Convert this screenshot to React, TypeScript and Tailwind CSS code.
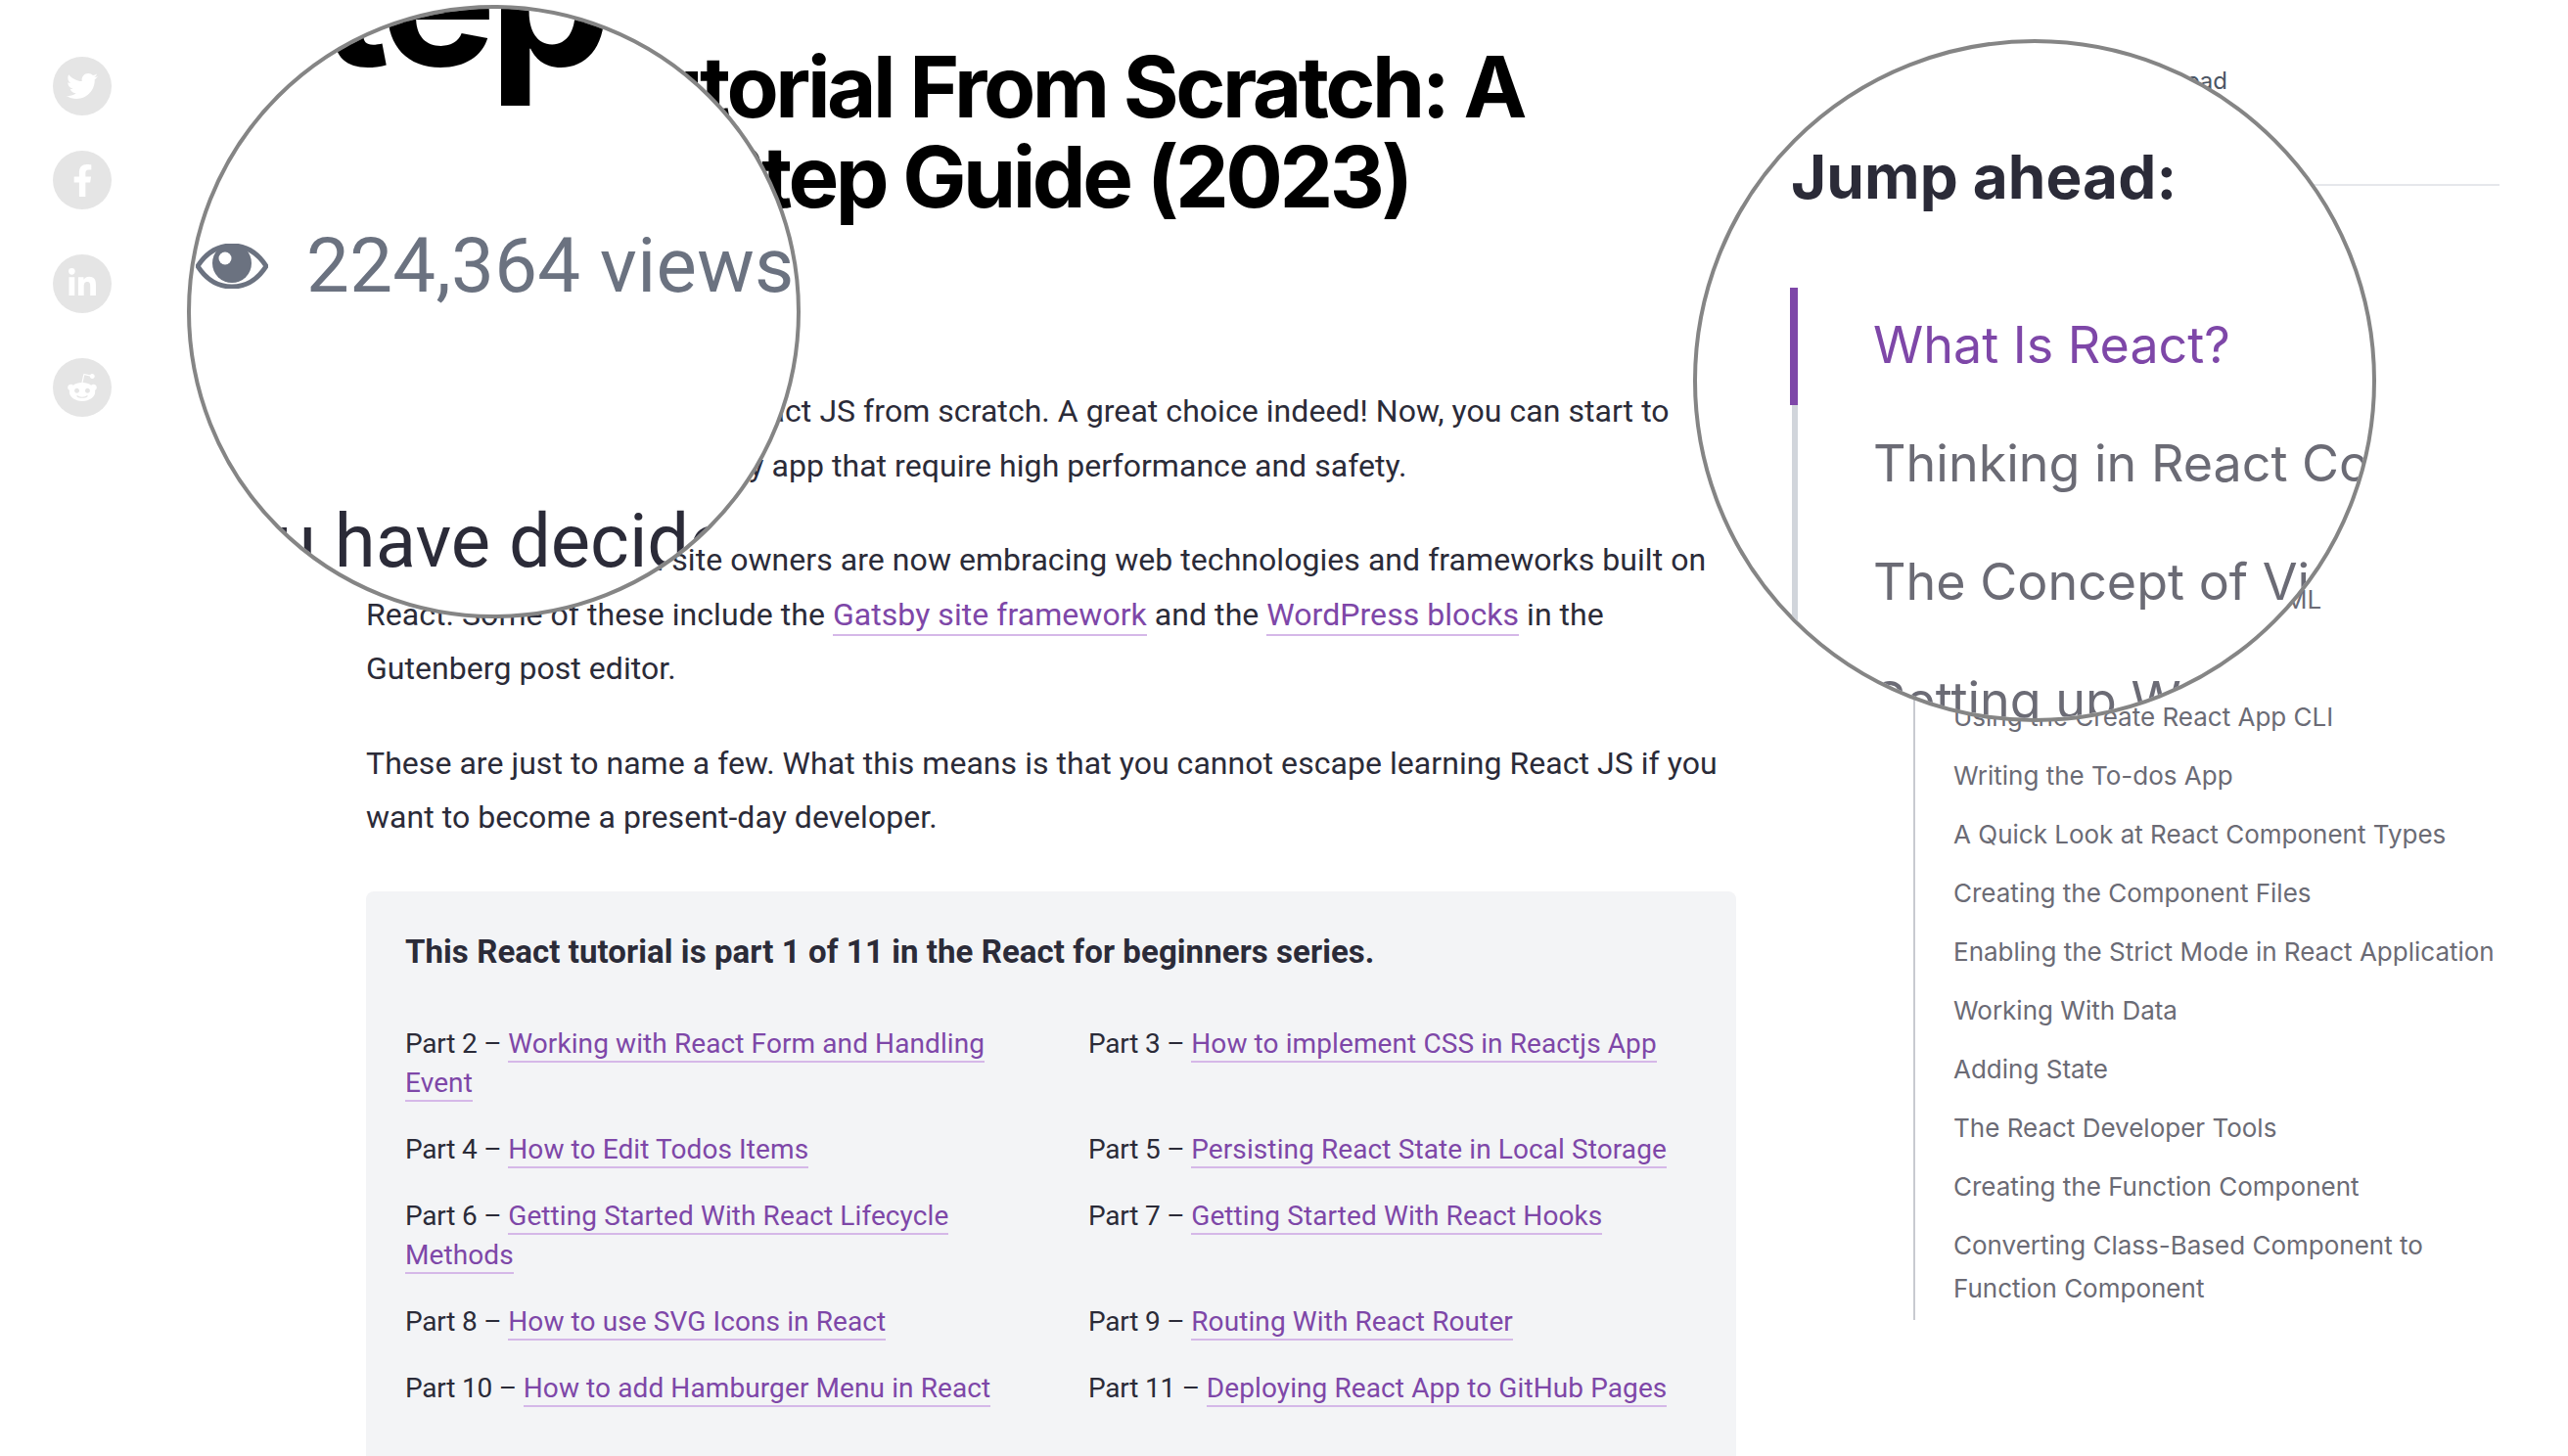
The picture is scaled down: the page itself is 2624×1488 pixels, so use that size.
import { FaTwitter, FaFacebookF, FaLinkedinIn, FaRedditAlien } from 'react-icons/fa';

type Part = { label: string; title: string };

const parts: Part[][] = [
  [
    { label: 'Part 2', title: 'Working with React Form and Handling Event' },
    { label: 'Part 3', title: 'How to implement CSS in Reactjs App' },
  ],
  [
    { label: 'Part 4', title: 'How to Edit Todos Items' },
    { label: 'Part 5', title: 'Persisting React State in Local Storage' },
  ],
  [
    { label: 'Part 6', title: 'Getting Started With React Lifecycle Methods' },
    { label: 'Part 7', title: 'Getting Started With React Hooks' },
  ],
  [
    { label: 'Part 8', title: 'How to use SVG Icons in React' },
    { label: 'Part 9', title: 'Routing With React Router' },
  ],
  [
    { label: 'Part 10', title: 'How to add Hamburger Menu in React' },
    { label: 'Part 11', title: 'Deploying React App to GitHub Pages' },
  ],
];

const toc = [
  'What Is React?',
  'Thinking in React Component',
  'Writing React Directly in HTML',
  'Setting up Tools',
  'Using the Create React App CLI',
  'Writing the To-dos App',
  'A Quick Look at React Component Types',
  'Creating the Component Files',
  'Enabling the Strict Mode in React Application',
  'Working With Data',
  'Adding State',
  'The React Developer Tools',
  'Creating the Function Component',
  'Converting Class-Based Component to Function Component',
];

function TextLink({ children }: { children: string }) {
  return <a className="text-[#7e47a8] border-b-2 border-[#d5b8e8] pb-[1px]">{children}</a>;
}

function EyeIcon({ className }: { className: string }) {
  return (
    <svg viewBox="0 0 74 46" className={className}>
      <path
        d="M2 23C11 9 23 2 37 2s26 7 35 21c-9 14-21 21-35 21S11 37 2 23Z"
        fill="none"
        stroke="#6b7280"
        strokeWidth="5"
      />
      <circle cx="37" cy="20" r="20" fill="#6b7280" />
      <circle cx="30" cy="15" r="6.5" fill="#fff" />
    </svg>
  );
}

function ShareButton({ children, className }: { children: React.ReactNode; className: string }) {
  return (
    <div className={`flex h-[60px] w-[60px] items-center justify-center rounded-full bg-[#e5e5e5] text-white ${className}`}>
      {children}
    </div>
  );
}

export default function App() {
  return (
    <div className="relative flex h-[1488px] w-[2624px] overflow-hidden bg-white font-['Roboto',sans-serif] text-[#2b2b38]">
      <aside className="w-[374px] shrink-0 pl-[54px] pt-[58px]">
        <ShareButton className="">
          <FaTwitter size={32} />
        </ShareButton>
        <ShareButton className="mt-[36px]">
          <FaFacebookF size={33} />
        </ShareButton>
        <ShareButton className="mt-[46px]">
          <FaLinkedinIn size={32} />
        </ShareButton>
        <ShareButton className="mt-[46px]">
          <FaRedditAlien size={32} />
        </ShareButton>
      </aside>

      <main className="w-[1400px] shrink-0 pt-[43px]">
        <h1 className="w-[1300px] font-['Inter',sans-serif] text-[87px] leading-[92px] font-bold tracking-[-0.04em] text-black">
          React Tutorial From Scratch: A Step-by-Step Guide (2023)
        </h1>
        <div className="mt-[166px] space-y-[41px] text-[32px] leading-[55.5px] tracking-[0.05px]">
          <p>
            You have decided to learn React JS from scratch. A great choice indeed! Now, you can start to build
            different kinds of fancy app that require high performance and safety.
          </p>
          <p>
            Many large and small site owners are now embracing web technologies and frameworks built on React. Some of
            these include the <TextLink>Gatsby site framework</TextLink> and the <TextLink>WordPress blocks</TextLink>{' '}
            in the Gutenberg post editor.
          </p>
          <p>
            These are just to name a few. What this means is that you cannot escape learning React JS if you want to
            become a present-day developer.
          </p>
        </div>

        <section className="mt-[47px] h-[700px] rounded-lg bg-[#f3f4f6] px-[40px] pt-[42px]">
          <p className="text-[33px] leading-[40px] font-bold tracking-[0.07px]">
            This React tutorial is part 1 of 11 in the React for beginners series.
          </p>
          <div className="mt-[54px] space-y-[28px] text-[28px] leading-[40px] tracking-[0.1px]">
            {parts.map((row) => (
              <div key={row[0].label} className="grid grid-cols-[698px_1fr]">
                {row.map((part, i) => (
                  <p key={part.label} className={i === 0 ? 'pr-[40px]' : ''}>
                    <span className="tracking-[-0.2px]">{part.label} – </span>
                    <TextLink>{part.title}</TextLink>
                  </p>
                ))}
              </div>
            ))}
          </div>
        </section>
      </main>

      <aside className="ml-[181px] w-[599px] shrink-0 font-['Inter',sans-serif] text-[#6b6b75]">
        <div className="h-[190px] border-b-2 border-[#e5e7eb] pt-[60px] pl-[186px] text-[24px] leading-[46px] text-[#4b5563]">
          28 min read
        </div>
        <ul className="mt-[281px] border-l-2 border-[#c8cad0] pb-[10px] pl-[39px] text-[26px] leading-[44px]">
          {toc.map((item, i) => (
            <li key={item} className={i === 0 ? '' : 'mt-[16px]'}>
              {item}
            </li>
          ))}
        </ul>
      </aside>

      {/* magnified lens, left */}
      <div className="absolute top-[5px] left-[191px] h-[627px] w-[627px] overflow-hidden rounded-full border-4 border-[#858585] bg-white">
        <div className="absolute inset-0 blur-[0.6px]">
          <p className="absolute top-[-107px] left-[7px] font-['Inter',sans-serif] text-[200px] leading-[184px] font-bold tracking-[-0.04em] whitespace-nowrap text-black">
            Step
          </p>
          <div className="absolute top-[235px] left-[5px] flex items-center whitespace-nowrap text-[#6b7280]">
            <EyeIcon className="h-[46px] w-[74px]" />
            <span className="ml-[39px] text-[78px] leading-[56px] tracking-[0.3px]">224,364 views</span>
          </div>
          <p className="absolute top-[488px] left-[-100px] text-[76px] leading-[112px] whitespace-nowrap">So you have decided to learn</p>
        </div>
      </div>

      {/* magnified lens, right */}
      <div className="absolute top-[40px] left-[1730px] h-[698px] w-[698px] overflow-hidden rounded-full border-4 border-[#858585] bg-white font-['Inter',sans-serif]">
        <div className="absolute inset-0 blur-[0.6px]">
          <p className="absolute top-[102px] left-[96px] text-[62px] leading-[70px] font-bold tracking-[0.1px] whitespace-nowrap text-[#2b2b38]">Jump ahead:</p>
          <ul className="absolute top-[265px] left-[97px] border-l-[6px] border-[#d1d5db] pl-[77px] text-[52px] leading-[88px] whitespace-nowrap text-[#6b6b75]">
            <li className="relative mb-[33px] text-[#7e47a8]">
              <span className="absolute top-[-15px] left-[-85px] h-[120px] w-[8px] bg-[#7e47a8]" />
              What Is React?
            </li>
            <li className="mb-[33px]">Thinking in React Component</li>
            <li className="mb-[33px]">The Concept of Virtual DOM</li>
            <li>Setting up Working Environment</li>
          </ul>
        </div>
      </div>
    </div>
  );
}
